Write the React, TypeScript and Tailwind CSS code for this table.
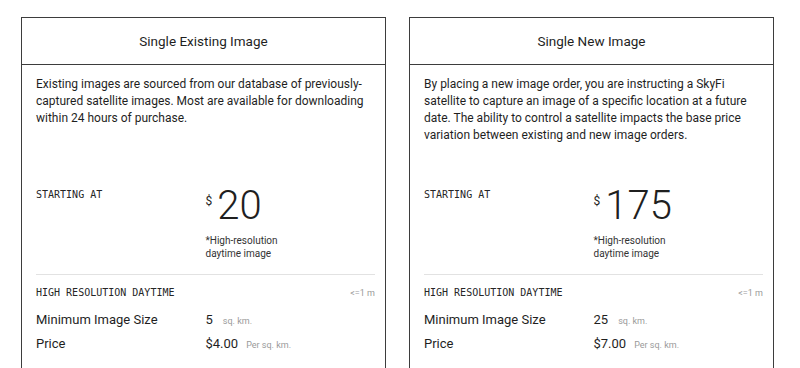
import React from 'react';

// --- PRICING CARDS DATA ---
const PLANS = [
  {
    title: 'Single Existing Image',
    desc: 'Existing images are sourced from our database of previously-captured satellite images. Most are available for downloading within 24 hours of purchase.',
    price: '20',
    minSize: '5',
    perKm: '$4.00',
  },
  {
    title: 'Single New Image',
    desc: 'By placing a new image order, you are instructing a SkyFi satellite to capture an image of a specific location at a future date. The ability to control a satellite impacts the base price variation between existing and new image orders.',
    price: '175',
    minSize: '25',
    perKm: '$7.00',
  },
];

const sans = "font-['Roboto','Liberation_Sans',sans-serif]";
const mono = "font-['DejaVu_Sans_Mono','Liberation_Mono',monospace]";

function PlanCard({ plan }: { plan: typeof PLANS[number] }) {
  return (
    <div className="border border-[#3d3d3d] bg-white text-[#1f1f1f]">
      <div className={`h-[47px] border-b border-[#3d3d3d] flex items-center justify-center text-[13.5px] ${sans}`}>
        {plan.title}
      </div>

      <div className="pt-[11px] pl-[14px] pr-[10px]">
        <p className={`h-[110px] -mr-[6px] text-[12px] leading-[17px] ${sans}`}>{plan.desc}</p>

        <div className="grid grid-cols-2">
          <div className={`mt-[2px] text-[10px] leading-[14px] text-[#262626] ${mono}`}>STARTING AT</div>
          <div>
            <div className={`flex items-start ${sans}`}>
              <span className="text-[12px] leading-[16px] mt-[7px] mr-[5px]">$</span>
              <span className="text-[40px] leading-[40px] font-light">{plan.price}</span>
            </div>
            <div className={`mt-[8px] text-[10px] leading-[13px] text-[#333] ${sans}`}>
              *High-resolution<br />daytime image
            </div>
          </div>
        </div>

        <div className="mt-[14px] border-t border-[#e2e2e2] pt-[11px]">
          <div className="flex items-center justify-between">
            <span className={`text-[10px] leading-[14px] text-[#262626] ${mono}`}>HIGH RESOLUTION DAYTIME</span>
            <span className={`text-[9px] leading-[14px] text-[#9a9a9a] ${sans}`}>{'<=1 m'}</span>
          </div>

          <div className={`mt-[11px] grid grid-cols-2 text-[13px] leading-[18px] ${sans}`}>
            <span>Minimum Image Size</span>
            <span className="flex items-baseline">
              {plan.minSize}
              <span className="ml-[10px] text-[9px] text-[#9a9a9a]">sq. km.</span>
            </span>
          </div>
          <div className={`mt-[5px] grid grid-cols-2 text-[13px] leading-[18px] ${sans}`}>
            <span>Price</span>
            <span className="flex items-baseline">
              {plan.perKm}
              <span className="ml-[8px] text-[9px] text-[#9a9a9a]">Per sq. km.</span>
            </span>
          </div>
        </div>

        <div className="mt-[14px] border-t border-[#e2e2e2] h-[40px]" />
      </div>
    </div>
  );
}

export default function App() {
  return (
    <div className="min-h-screen bg-white pt-[17px] pl-[21px]">
      <div className="grid grid-cols-[365px_365px] gap-[23px]">
        {PLANS.map((plan) => (
          <PlanCard key={plan.title} plan={plan} />
        ))}
      </div>
    </div>
  );
}
